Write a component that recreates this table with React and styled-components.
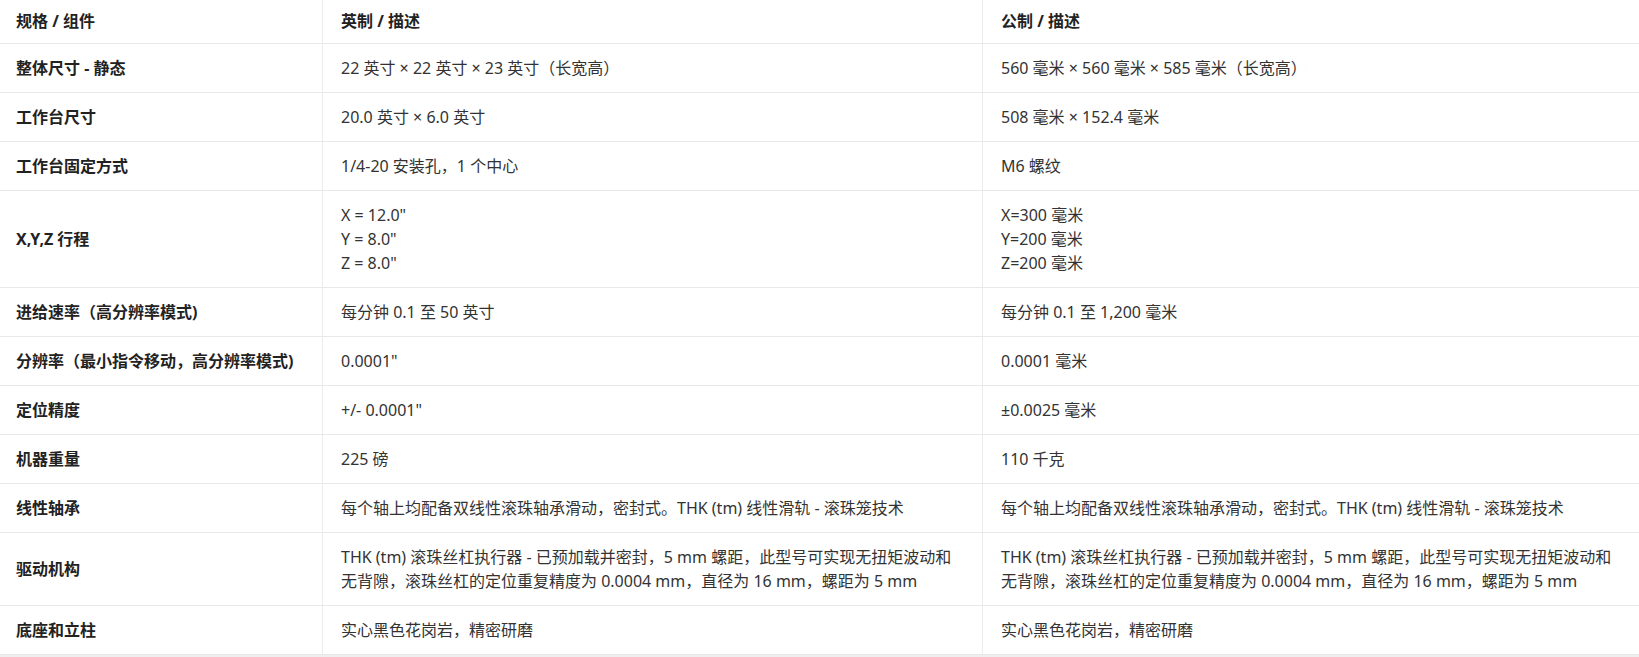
import React from "react";
import styled, { createGlobalStyle } from "styled-components";

const Global = createGlobalStyle`
  html, body {
    margin: 0;
    padding: 0;
    background: #efefef;
  }
  body {
    font-family: "Noto Sans", "Noto Sans CJK SC", sans-serif;
    font-size: 16px;
    color: #333;
  }
`;

const Table = styled.div`
  display: grid;
  grid-template-columns: 323px 660px 1fr;
  width: 1639px;
  background: #fff;
  border-bottom: 1px solid #e6e6e6;
`;

const Row = styled.div`
  display: contents;
  &:last-child > div {
    border-bottom: none;
  }
`;

const Cell = styled.div`
  display: flex;
  flex-direction: column;
  justify-content: center;
  box-sizing: border-box;
  padding: ${(p) => (p.$head ? "9px" : "12px")} 18px
    ${(p) => (p.$head ? "10px" : "12px")}
    ${(p) => (p.$first ? "16px" : "18px")};
  line-height: 24px;
  font-size: 16px;
  font-weight: ${(p) => (p.$bold ? 700 : 400)};
  color: ${(p) => (p.$bold ? "#222" : "#333")};
  border-bottom: 1px solid #e8e8e8;
  border-right: ${(p) => (p.$last ? "none" : "1px solid #ececec")};
  white-space: nowrap;
`;

const Line = styled.span`
  display: block;
`;

const rows = [
  ["整体尺寸 - 静态", ["22 英寸 × 22 英寸 × 23 英寸（长宽高）"], ["560 毫米 × 560 毫米 × 585 毫米（长宽高）"]],
  ["工作台尺寸", ["20.0 英寸 × 6.0 英寸"], ["508 毫米 × 152.4 毫米"]],
  ["工作台固定方式", ["1/4-20 安装孔，1 个中心"], ["M6 螺纹"]],
  ["X,Y,Z 行程", ["X = 12.0\"", "Y = 8.0\"", "Z = 8.0\""], ["X=300 毫米", "Y=200 毫米", "Z=200 毫米"]],
  ["进给速率（高分辨率模式)", ["每分钟 0.1 至 50 英寸"], ["每分钟 0.1 至 1,200 毫米"]],
  ["分辨率（最小指令移动，高分辨率模式)", ["0.0001\""], ["0.0001 毫米"]],
  ["定位精度", ["+/- 0.0001\""], ["±0.0025 毫米"]],
  ["机器重量", ["225 磅"], ["110 千克"]],
  [
    "线性轴承",
    ["每个轴上均配备双线性滚珠轴承滑动，密封式。THK (tm) 线性滑轨 - 滚珠笼技术"],
    ["每个轴上均配备双线性滚珠轴承滑动，密封式。THK (tm) 线性滑轨 - 滚珠笼技术"],
  ],
  [
    "驱动机构",
    [
      "THK (tm) 滚珠丝杠执行器 - 已预加载并密封，5 mm 螺距，此型号可实现无扭矩波动和",
      "无背隙，滚珠丝杠的定位重复精度为 0.0004 mm，直径为 16 mm，螺距为 5 mm",
    ],
    [
      "THK (tm) 滚珠丝杠执行器 - 已预加载并密封，5 mm 螺距，此型号可实现无扭矩波动和",
      "无背隙，滚珠丝杠的定位重复精度为 0.0004 mm，直径为 16 mm，螺距为 5 mm",
    ],
  ],
  ["底座和立柱", ["实心黑色花岗岩，精密研磨"], ["实心黑色花岗岩，精密研磨"]],
];

export default function App() {
  return (
    <>
      <Global />
      <Table>
        <Row>
          <Cell $head $bold $first>规格 / 组件</Cell>
          <Cell $head $bold>英制 / 描述</Cell>
          <Cell $head $bold $last>公制 / 描述</Cell>
        </Row>
        {rows.map(([label, imp, met]) => (
          <Row key={label}>
            <Cell $bold $first>{label}</Cell>
            <Cell>
              {imp.map((t) => (
                <Line key={t}>{t}</Line>
              ))}
            </Cell>
            <Cell $last>
              {met.map((t) => (
                <Line key={t}>{t}</Line>
              ))}
            </Cell>
          </Row>
        ))}
      </Table>
    </>
  );
}
